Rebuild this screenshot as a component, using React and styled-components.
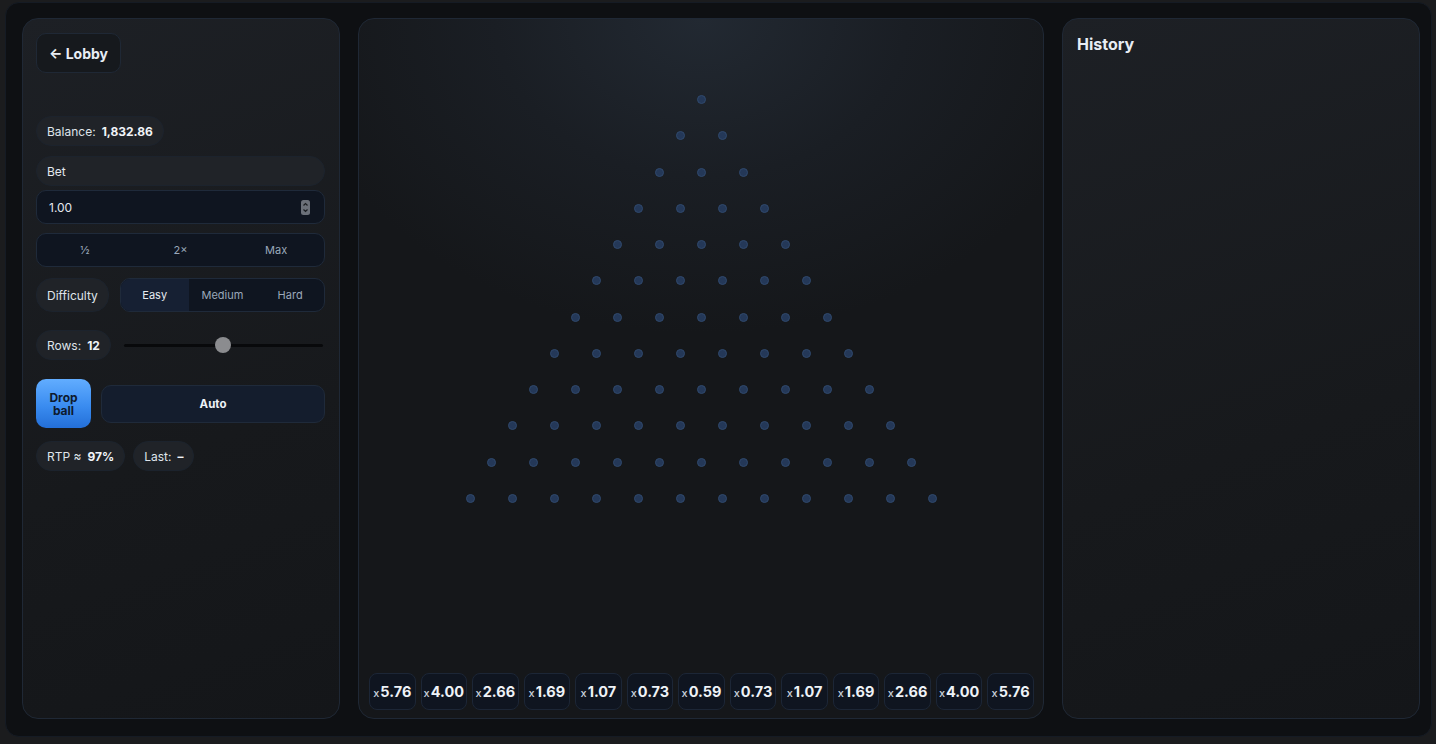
import React from "react";
import styled, { createGlobalStyle } from "styled-components";

const GlobalStyle = createGlobalStyle`
  html, body {
    margin: 0;
    padding: 0;
    background: #1b1c1e;
    font-family: Inter, "Noto Sans", "Liberation Sans", sans-serif;
    color: #e6ebf2;
  }
  * { box-sizing: border-box; }
`;

const MULTIPLIERS = ["5.76", "4.00", "2.66", "1.69", "1.07", "0.73", "0.59", "0.73", "1.07", "1.69", "2.66", "4.00", "5.76"];
const ROWS = 12;

const App = () => {
  return (
    <>
      <GlobalStyle />
      <Shell>
        <Layout>
          <SidePanel>
            <LobbyButton>← Lobby</LobbyButton>
            <Pill $mt={43}>
              Balance: <strong>1,832.86</strong>
            </Pill>
            <LabelBar>Bet</LabelBar>
            <InputBox>
              <span>1.00</span>
              <Spinner>
                <svg width="9" height="15" viewBox="0 0 9 15">
                  <rect x="0" y="0" width="9" height="15" rx="2.5" fill="#6b7079" />
                  <path d="M2.5 5.5 L4.5 3.5 L6.5 5.5" stroke="#1b1e22" strokeWidth="1.2" fill="none" />
                  <path d="M2.5 9.5 L4.5 11.5 L6.5 9.5" stroke="#1b1e22" strokeWidth="1.2" fill="none" />
                </svg>
              </Spinner>
            </InputBox>
            <QuickRow>
              <QuickButton>½</QuickButton>
              <QuickButton>2×</QuickButton>
              <QuickButton>Max</QuickButton>
            </QuickRow>
            <FieldRow $mt={11}>
              <Pill $h={34}>Difficulty</Pill>
              <Segmented>
                <Segment $active>Easy</Segment>
                <Segment>Medium</Segment>
                <Segment>Hard</Segment>
              </Segmented>
            </FieldRow>
            <FieldRow $mt={18}>
              <Pill>
                Rows: <strong>12</strong>
              </Pill>
              <Slider>
                <Track />
                <Thumb style={{ left: `${((12 - 8) / 8) * 100}%` }} />
              </Slider>
            </FieldRow>
            <ActionRow>
              <DropButton>
                Drop
                <br />
                ball
              </DropButton>
              <AutoButton>Auto</AutoButton>
            </ActionRow>
            <StatsRow>
              <Pill>
                RTP ≈ <strong>97%</strong>
              </Pill>
              <Pill>
                Last: <strong>–</strong>
              </Pill>
            </StatsRow>
          </SidePanel>

          <BoardPanel>
            <PegArea>
              {Array.from({ length: ROWS }).map((_, r) => (
                <PegRow key={`row${r}`}>
                  {Array.from({ length: r + 1 }).map((__, i) => (
                    <Peg key={`peg${r}_${i}`} />
                  ))}
                </PegRow>
              ))}
            </PegArea>
            <Buckets>
              {MULTIPLIERS.map((m, idx) => (
                <Bucket key={`bucket${idx}`}>
                  <small>x</small>
                  {m}
                </Bucket>
              ))}
            </Buckets>
          </BoardPanel>

          <HistoryPanel>
            <Title>History</Title>
          </HistoryPanel>
        </Layout>
      </Shell>
    </>
  );
};

export default App;

const Shell = styled.div`
  margin: 2px 4px 7px 5px;
  height: 735px;
  border-radius: 14px;
  background: #0e1013;
  border: 1px solid #151b24;
  padding: 15px 15px 15px 16px;
`;

const Layout = styled.div`
  display: grid;
  grid-template-columns: 318px 686px 358px;
  gap: 18px;
  height: 701px;
`;

const Panel = styled.div`
  border: 1px solid #1f2835;
  border-radius: 16px;
  background: linear-gradient(160deg, #1d2025 0%, #17191c 60%, #141619 100%);
`;

const SidePanel = styled(Panel)`
  display: flex;
  flex-direction: column;
  align-items: flex-start;
  padding: 14px 14px 14px 13px;
`;

const LobbyButton = styled.div`
  height: 40px;
  padding: 0 12px;
  display: flex;
  align-items: center;
  border-radius: 10px;
  border: 1px solid #1f2835;
  background: #16191d;
  font-size: 14px;
  font-weight: 700;
  color: #e8edf4;
`;

const Pill = styled.div`
  height: ${(p) => p.$h || 30}px;
  margin-top: ${(p) => p.$mt || 0}px;
  padding: 0 10px;
  display: inline-flex;
  align-items: center;
  gap: 6px;
  border-radius: 16px;
  border: 1px solid #1c232d;
  background: #202328;
  font-size: 12px;
  color: #dfe4ea;
  white-space: nowrap;
  flex-shrink: 0;
  strong {
    font-weight: 700;
    color: #f1f4f8;
  }
`;

const LabelBar = styled.div`
  align-self: stretch;
  height: 30px;
  margin-top: 10px;
  padding: 0 10px;
  display: flex;
  align-items: center;
  border-radius: 15px;
  border: 1px solid #1c232d;
  background: #202328;
  font-size: 12px;
  color: #e4e8ee;
`;

const InputBox = styled.div`
  align-self: stretch;
  height: 34px;
  margin-top: 4px;
  padding: 0 14px 0 12px;
  display: flex;
  align-items: center;
  justify-content: space-between;
  border-radius: 10px;
  border: 1px solid #1f2a3a;
  background: #0f1520;
  font-size: 12px;
  color: #e4e8ee;
`;

const Spinner = styled.div`
  display: flex;
  align-items: center;
`;

const QuickRow = styled.div`
  align-self: stretch;
  height: 34px;
  margin-top: 9px;
  display: grid;
  grid-template-columns: repeat(3, 1fr);
  border-radius: 10px;
  border: 1px solid #1f2a3a;
  background: #0f1520;
`;

const QuickButton = styled.div`
  display: flex;
  align-items: center;
  justify-content: center;
  font-size: 11px;
  color: #9aa8ba;
`;

const FieldRow = styled.div`
  align-self: stretch;
  margin-top: ${(p) => p.$mt || 0}px;
  display: flex;
  align-items: center;
  gap: 11px;
`;

const Segmented = styled.div`
  flex: 1;
  height: 34px;
  display: grid;
  grid-template-columns: repeat(3, 1fr);
  border-radius: 10px;
  border: 1px solid #1f2a3a;
  background: #0f1520;
  overflow: hidden;
`;

const Segment = styled.div`
  display: flex;
  align-items: center;
  justify-content: center;
  font-size: 11px;
  color: ${(p) => (p.$active ? "#e6ebf2" : "#9aa8ba")};
  background: ${(p) => (p.$active ? "#162033" : "transparent")};
`;

const Slider = styled.div`
  position: relative;
  flex: 1;
  height: 18px;
  margin: 0 2px;
  display: flex;
  align-items: center;
`;

const Track = styled.div`
  width: 100%;
  height: 3px;
  border-radius: 2px;
  background: #08090b;
`;

const Thumb = styled.div`
  position: absolute;
  top: 1px;
  width: 16px;
  height: 16px;
  margin-left: -8px;
  border-radius: 50%;
  background: #8b8c8f;
`;

const ActionRow = styled.div`
  align-self: stretch;
  margin-top: 19px;
  display: flex;
  align-items: center;
  gap: 10px;
`;

const DropButton = styled.div`
  width: 55px;
  height: 49px;
  display: flex;
  align-items: center;
  justify-content: center;
  text-align: center;
  line-height: 13px;
  border-radius: 10px;
  background: linear-gradient(180deg, #62adff 0%, #3a8cf0 55%, #236fd8 100%);
  font-size: 12px;
  font-weight: 700;
  color: #0d1a2e;
`;

const AutoButton = styled.div`
  flex: 1;
  height: 38px;
  display: flex;
  align-items: center;
  justify-content: center;
  border-radius: 10px;
  border: 1px solid #1f2a3a;
  background: #141d2d;
  font-size: 11.5px;
  font-weight: 700;
  color: #eef2f7;
`;

const StatsRow = styled.div`
  margin-top: 13px;
  display: flex;
  gap: 8px;
`;

const BoardPanel = styled(Panel)`
  display: flex;
  flex-direction: column;
  padding: 0 9px 8px 10px;
  background: radial-gradient(ellipse 60% 45% at 50% 0%, #222932 0%, #1a1e24 50%, #15171a 100%);
`;

const PegArea = styled.div`
  flex: 1;
  padding-top: 76px;
  display: flex;
  flex-direction: column;
  gap: 27.27px;
`;

const PegRow = styled.div`
  display: flex;
  justify-content: center;
  gap: 33px;
`;

const Peg = styled.div`
  width: 9px;
  height: 9px;
  border-radius: 50%;
  background: #243858;
  border: 1px solid #30496d;
`;

const Buckets = styled.div`
  display: flex;
  gap: 5px;
`;

const Bucket = styled.div`
  flex: 1;
  height: 37px;
  display: flex;
  align-items: center;
  justify-content: center;
  border-radius: 8px;
  border: 1px solid #1c2636;
  background: #0f1520;
  font-size: 14.5px;
  font-weight: 700;
  color: #eef2f7;
  small {
    font-size: 11px;
    font-weight: 500;
    color: #c9d1dc;
    margin-right: 1px;
    margin-top: 2px;
  }
`;

const HistoryPanel = styled(Panel)`
  padding: 14px 14px;
`;

const Title = styled.div`
  font-size: 16px;
  font-weight: 700;
  color: #e8edf4;
  line-height: 22px;
`;
